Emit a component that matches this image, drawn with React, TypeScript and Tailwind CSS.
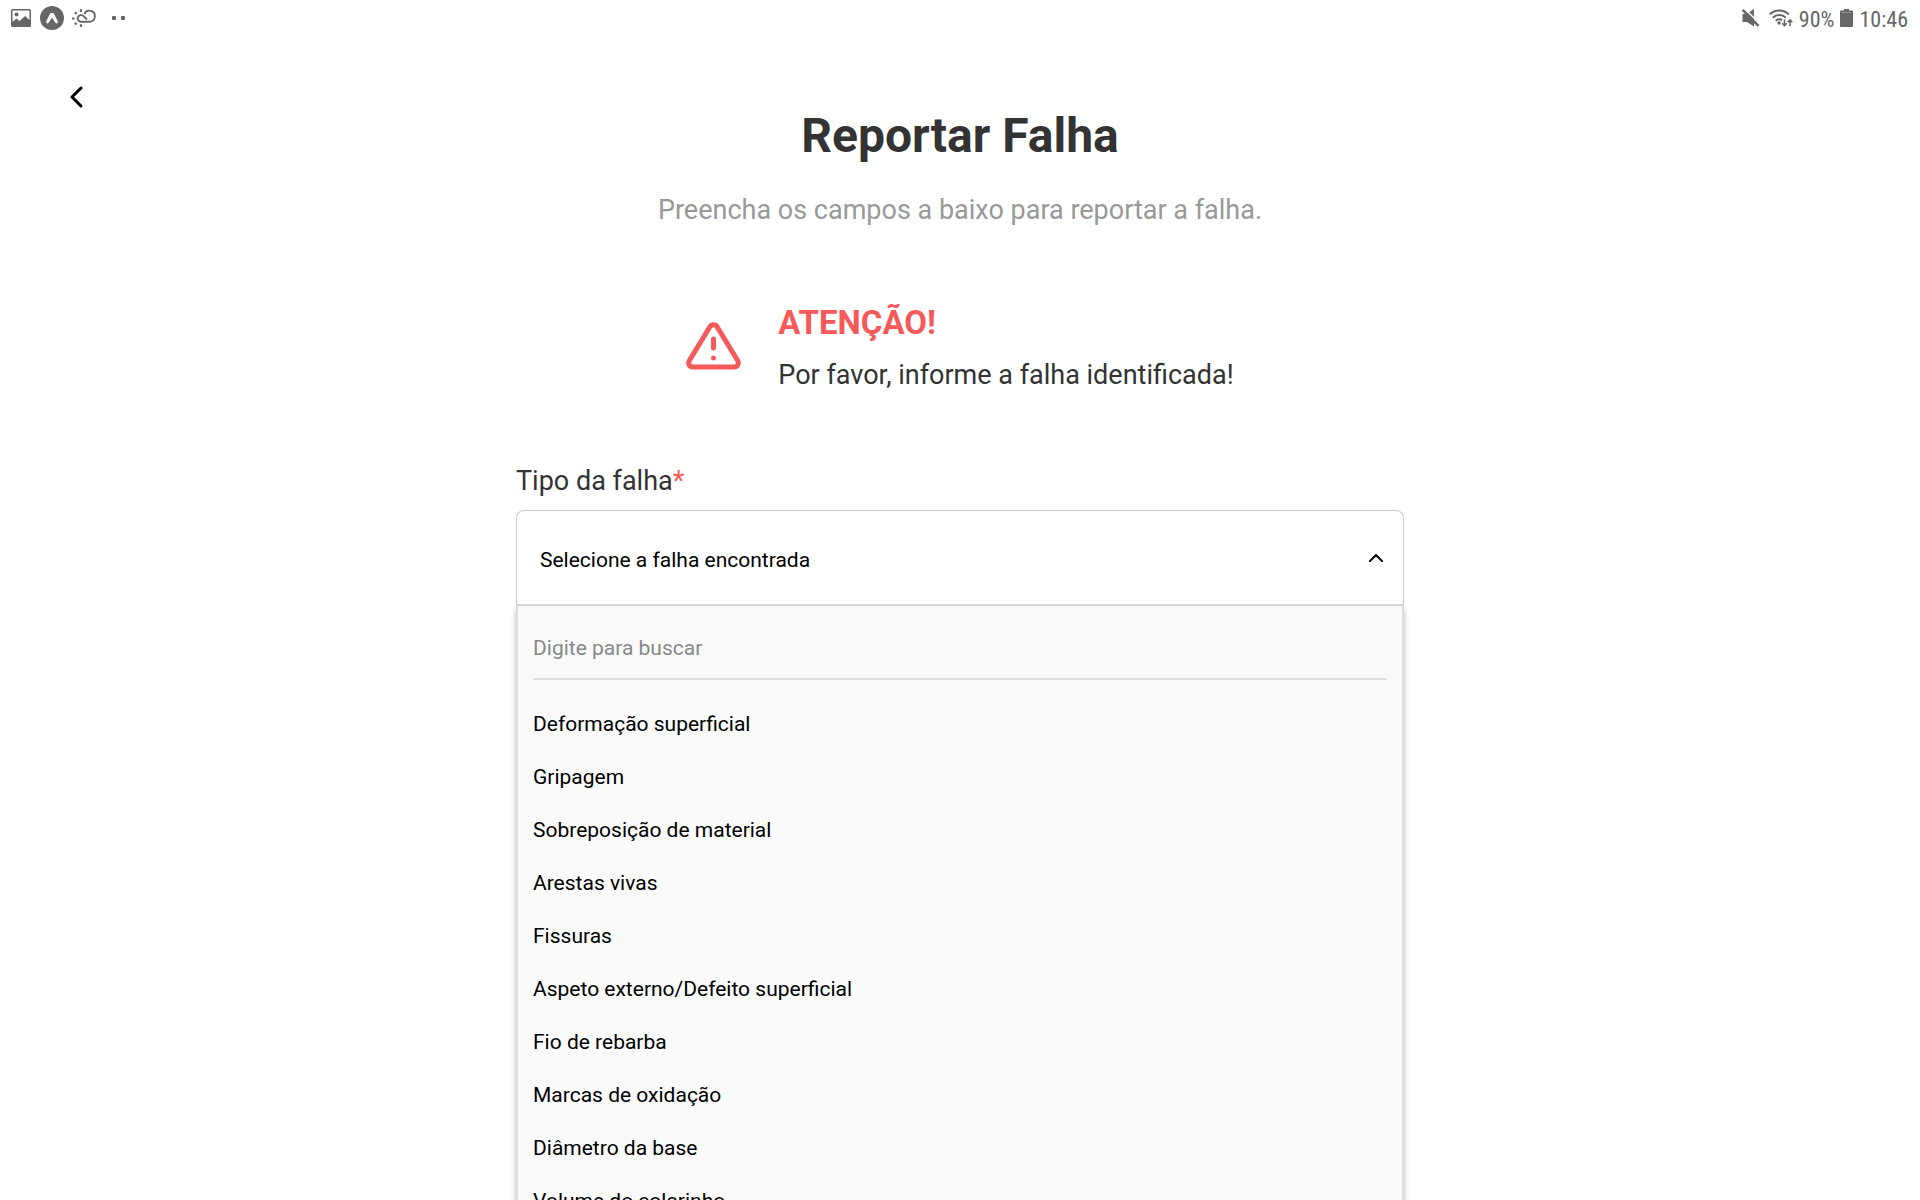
import { useState } from "react";

const failures = [
  "Deformação superficial",
  "Gripagem",
  "Sobreposição de material",
  "Arestas vivas",
  "Fissuras",
  "Aspeto externo/Defeito superficial",
  "Fio de rebarba",
  "Marcas de oxidação",
  "Diâmetro da base",
  "Volume do colarinho",
];

function PictureIcon() {
  return (
    <svg width="20" height="18" viewBox="0 0 20 18" fill="currentColor" aria-hidden="true">
      <path
        fillRule="evenodd"
        d="M1.5 0h17A1.5 1.5 0 0 1 20 1.5v15a1.5 1.5 0 0 1-1.5 1.5h-17A1.5 1.5 0 0 1 0 16.5v-15A1.5 1.5 0 0 1 1.5 0ZM1.500 1.500v11.500l4-3.500 3 2.500 5.500-5 4.500 4V1.500Z"
      />
      <circle cx="5.500" cy="5.500" r="2" />
    </svg>
  );
}

function ExpoIcon() {
  return (
    <svg width="24" height="24" viewBox="0 0 24 24" aria-hidden="true">
      <circle cx="12" cy="12" r="12" fill="currentColor" />
      <path
        d="M11 7h2q.5 0 .8.600l4.200 8.200q-1.200 2.600-2.600 1L12 11.500l-3.400 5.300q-1.400 1.600-2.600-1l4.200-8.200Q10.500 7 11 7Z"
        fill="#fff"
      />
    </svg>
  );
}

function WeatherIcon() {
  return (
    <svg
      width="24"
      height="18"
      viewBox="0 0 24 18"
      fill="none"
      stroke="currentColor"
      strokeWidth="1.900"
      aria-hidden="true"
    >
      <path d="M12.300 5A5.500 5.500 0 1 1 17.700 12.700H9A3.300 3.300 0 1 1 11.500 7.200L15 10.500" />
      <path d="M0 9.500h2.500M3 3.300l1.600 1.600M9 .300v2.600M3 15.500l1.600-1.600M9 15.200v3" strokeWidth="2.200" />
    </svg>
  );
}

function MuteIcon() {
  return (
    <svg width="18" height="18" viewBox="0 0 18 18" aria-hidden="true">
      <path d="M0.500 5h4L12 0v17.500L5 13H0.500Z" fill="currentColor" />
      <path d="M2.500 -0.500 18 15" stroke="#fff" strokeWidth="1.500" />
      <path d="M0.700 1 16.500 16.800" stroke="currentColor" strokeWidth="2.500" />
    </svg>
  );
}

function WifiIcon() {
  return (
    <svg width="24" height="18" viewBox="0 0 24 18" fill="none" stroke="currentColor" aria-hidden="true">
      <path d="M.8 5.400a13.500 13.500 0 0 1 19 0M3.800 8.700a9.300 9.300 0 0 1 13 0M6.700 11.800a5.200 5.200 0 0 1 6.400-.600" strokeWidth="2" />
      <circle cx="10" cy="14" r="1.700" fill="currentColor" stroke="none" />
      <path d="M15.500 10.500v6M13.200 14.300l2.300 2.300 2.300-2.300M21 17v-6M18.800 13.200 21 11l2.200 2.200" strokeWidth="1.600" />
    </svg>
  );
}

function BatteryIcon() {
  return (
    <svg width="13" height="18" viewBox="0 0 13 18" fill="currentColor" aria-hidden="true">
      <path d="M4 0h5v1.500h3A1 1 0 0 1 13 2.500v14.500a1 1 0 0 1-1 1h-11A1 1 0 0 1 0 17v-14.500A1 1 0 0 1 1 1.500H4Z" />
      <path d="M2 3.500h9" stroke="#fff" strokeWidth="1" opacity=".3" />
    </svg>
  );
}

function StatusBar() {
  return (
    <header className="flex h-9 items-center justify-between pr-3 pl-[11px] text-[#666666]">
      <div className="flex items-center">
        <PictureIcon />
        <span className="ml-[9px]">
          <ExpoIcon />
        </span>
        <span className="ml-2">
          <WeatherIcon />
        </span>
        <span className="ml-4 flex gap-[5px]">
          <span className="size-1 rounded-[1px] bg-current" />
          <span className="size-1 rounded-[1px] bg-current" />
        </span>
      </div>
      <div className="flex items-center font-['Roboto_Condensed',Roboto,sans-serif] text-[22px] leading-8">
        <MuteIcon />
        <span className="ml-[9px]">
          <WifiIcon />
        </span>
        <span className="ml-[6px] pt-[3px]">90%</span>
        <span className="ml-[6px]">
          <BatteryIcon />
        </span>
        <span className="ml-[6px] pt-[3px]">10:46</span>
      </div>
    </header>
  );
}

function WarningIcon() {
  return (
    <svg
      className="shrink-0"
      width="56"
      height="48"
      viewBox="0 0 56 48"
      fill="none"
      stroke="currentColor"
      strokeWidth="5"
      strokeLinecap="round"
      strokeLinejoin="round"
      aria-hidden="true"
    >
      <path d="M23.600 5.200 3.400 38.500C1.500 41.700 3.500 45 7 45h41c3.500 0 5.500-3.300 3.600-6.500L31.400 5.200c-1.800-3.300-6-3.300-7.800 0Z" />
      <path d="M27.500 17v9" />
      <path d="M27.500 36v.1" />
    </svg>
  );
}

export default function App() {
  const [open, setOpen] = useState(true);
  const [query, setQuery] = useState("");
  const [selected, setSelected] = useState("Selecione a falha encontrada");
  const visible = failures.filter((f) => f.toLowerCase().includes(query.toLowerCase()));

  return (
    <div className="h-screen overflow-hidden bg-white font-[Roboto,sans-serif] text-[#333333]">
      <StatusBar />
      <nav className="flex h-[72px] items-end px-[58px]">
        <button type="button" aria-label="Voltar" className="flex h-[22px] w-9 items-start justify-center text-black">
          <svg width="14" height="22" viewBox="0 0 14 22" fill="none" stroke="currentColor" strokeWidth="3" strokeLinecap="round" strokeLinejoin="round">
            <path d="M12 2 3 11l9 9" />
          </svg>
        </button>
      </nav>
      <main className="mx-auto flex w-full max-w-[888px] flex-col">
        <h1 className="text-center text-[48px] leading-[56px] font-bold">Reportar Falha</h1>
        <p className="mt-[30px] text-center text-[27px] leading-8 text-[#999999]">
          Preencha os campos a baixo para reportar a falha.
        </p>
        <section role="alert" className="mt-[77px] flex items-center justify-center gap-9">
          <span className="pb-[2px] text-[#f55a5a]">
            <WarningIcon />
          </span>
          <div>
            <h2 className="text-[33px] leading-10 font-bold text-[#f55a5a]">ATENÇÃO!</h2>
            <p className="mt-4 text-[27px] leading-8">Por favor, informe a falha identificada!</p>
          </div>
        </section>
        <label htmlFor="failure-type" className="mt-[74px] text-[27px] leading-8">
          Tipo da falha<span className="text-[#f55a5a]">*</span>
        </label>
        <button
          id="failure-type"
          type="button"
          aria-haspopup="listbox"
          aria-expanded={open}
          onClick={() => setOpen(!open)}
          className="mt-[13px] flex h-24 shrink-0 items-center justify-between rounded-t-lg border border-b-2 border-[#cccccc] border-b-[#d8d8d8] pr-5 pl-[23px] text-left text-[21px] leading-6 text-black"
        >
          <span className="pt-1">{selected}</span>
          <svg width="14" height="8" viewBox="0 0 14 8" fill="none" stroke="currentColor" strokeWidth="2" strokeLinecap="round" strokeLinejoin="round" aria-hidden="true">
            <path d="M1 7l6-6 6 6" />
          </svg>
        </button>
        {open && (
          <div className="h-[660px] shrink-0 border-x-2 border-[#dddddd] bg-[#fafafa] px-[15px] text-[21px] leading-6 text-black shadow-[0_4px_5px_rgba(0,0,0,0.3)]">
            <input
              type="text"
              aria-label="Digite para buscar"
              placeholder="Digite para buscar"
              value={query}
              onChange={(e) => setQuery(e.target.value)}
              className="block h-[74px] w-full border-b-2 border-[#dddddd] pt-[11px] outline-none placeholder:text-[#888888]"
            />
            <ul className="mt-[17px]">
              {visible.map((failure) => (
                <li key={failure}>
                  <button
                    type="button"
                    onClick={() => {
                      setSelected(failure);
                      setOpen(false);
                    }}
                    className="block h-[53px] w-full text-left"
                  >
                    {failure}
                  </button>
                </li>
              ))}
            </ul>
          </div>
        )}
      </main>
    </div>
  );
}
